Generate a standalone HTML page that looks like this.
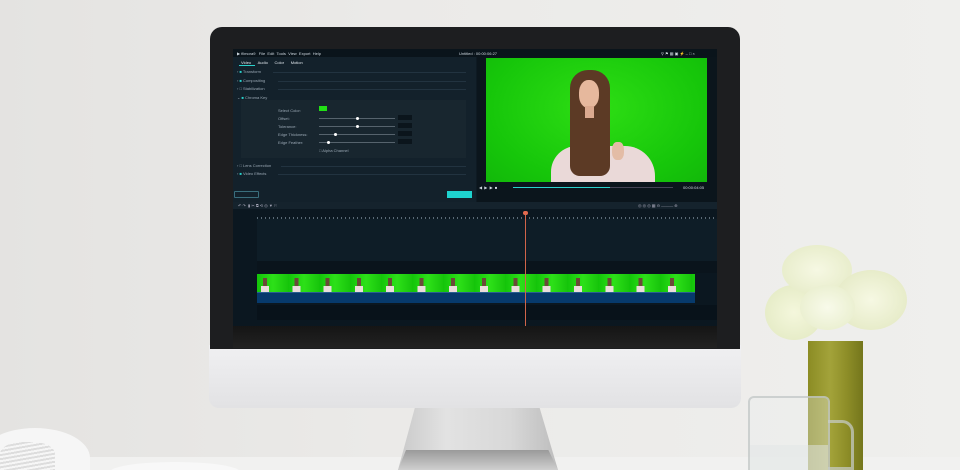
<!DOCTYPE html>
<html><head><style>
*{margin:0;padding:0;box-sizing:border-box}
html,body{width:960px;height:470px;overflow:hidden}
body{position:relative;background:linear-gradient(90deg,#e4e3e1 0%,#ebeae8 40%,#efefed 100%);font-family:"Liberation Sans",sans-serif}
.a{position:absolute}
.t{position:absolute;color:#9aa8b4;font-size:4px;white-space:nowrap}
.ln{position:absolute;height:1px;background:#223340}
</style></head><body>
<div class="a" style="left:0;top:457px;width:960px;height:13px;background:#f1f1f0"></div>
<div class="a" style="left:-20px;top:428px;width:110px;height:60px;border-radius:50% 50% 0 0;background:#f6f6f6"></div>
<div class="a" style="left:0;top:442px;width:55px;height:30px;background:repeating-linear-gradient(170deg,#ddd 0 2px,#f6f6f6 2px 4px);border-radius:40% 40% 0 0"></div>
<div class="a" style="left:110px;top:462px;width:130px;height:20px;border-radius:50%;background:#f8f8f8"></div>
<div class="a" style="left:398px;top:405px;width:160px;height:65px;background:linear-gradient(90deg,#c9c9c9,#e2e2e2 30%,#d8d8d8 70%,#bdbdbd);clip-path:polygon(11% 0,88% 0,100% 100%,0 100%)"></div>
<div class="a" style="left:398px;top:450px;width:160px;height:20px;background:linear-gradient(#9a9a9a,#cfcfcf);clip-path:polygon(5% 0,94% 0,100% 100%,0 100%)"></div>
<div class="a" style="left:209px;top:345px;width:532px;height:63px;background:linear-gradient(#f0f0f2,#e2e2e4);border-radius:0 0 10px 10px"></div>
<div class="a" style="left:210px;top:27px;width:530px;height:322px;background:#1d1e20;border-radius:12px 12px 0 0"></div>
<div class="a" style="left:233px;top:49px;width:484px;height:277px;background:#0e1a23;overflow:hidden">
 <div class="a" style="left:0;top:0;width:484px;height:8px;background:#0a141b"></div>
 <div class="t" style="left:4px;top:2px;color:#cfd8e0">▶ filmora9 &nbsp; File &nbsp;Edit &nbsp;Tools &nbsp;View &nbsp;Export &nbsp;Help</div>
 <div class="t" style="left:226px;top:2px;color:#cfd8e0">Untitled : 00:00:06:27</div>
 <div class="t" style="left:428px;top:2px;color:#cfd8e0">⚲ ⚑ ▦ ▣ ⚡ – □ ×</div>
 <div class="a" style="left:0;top:8px;width:243px;height:150px;background:#13212b"></div>
 <div class="t" style="left:8px;top:11px;color:#dfe6ec">Video &nbsp;&nbsp;&nbsp;&nbsp; Audio &nbsp;&nbsp;&nbsp;&nbsp; Color &nbsp;&nbsp;&nbsp;&nbsp; Motion</div>
 <div class="a" style="left:6px;top:16px;width:16px;height:1px;background:#2ad1cc"></div>
 <div class="t" style="left:4px;top:20px">› <span style="color:#2ad1cc">■</span> Transform</div>
 <div class="ln" style="left:40px;top:23px;width:193px"></div>
 <div class="t" style="left:4px;top:29px">› <span style="color:#2ad1cc">■</span> Compositing</div>
 <div class="ln" style="left:45px;top:32px;width:188px"></div>
 <div class="t" style="left:4px;top:37px">› □ Stabilization</div>
 <div class="ln" style="left:45px;top:40px;width:188px"></div>
 <div class="t" style="left:4px;top:46px">⌄ <span style="color:#2ad1cc">■</span> Chroma Key</div>
 <div class="a" style="left:8px;top:51px;width:225px;height:58px;background:#18262f"></div>
 <div class="t" style="left:45px;top:59px">Select Color:</div>
 <div class="a" style="left:86px;top:57px;width:8px;height:5px;background:#22e016"></div>
 <div class="t" style="left:45px;top:67px">Offset:</div>
 <div class="t" style="left:45px;top:75px">Tolerance:</div>
 <div class="t" style="left:45px;top:83px">Edge Thickness:</div>
 <div class="t" style="left:45px;top:91px">Edge Feather:</div>
 <div class="a" style="left:86px;top:69px;width:76px;height:1px;background:#56636d"></div>
 <div class="a" style="left:86px;top:77px;width:76px;height:1px;background:#56636d"></div>
 <div class="a" style="left:86px;top:85px;width:76px;height:1px;background:#56636d"></div>
 <div class="a" style="left:86px;top:93px;width:76px;height:1px;background:#56636d"></div>
 <div class="a" style="left:123px;top:68px;width:3px;height:3px;background:#fff;border-radius:50%"></div>
 <div class="a" style="left:123px;top:76px;width:3px;height:3px;background:#fff;border-radius:50%"></div>
 <div class="a" style="left:101px;top:84px;width:3px;height:3px;background:#fff;border-radius:50%"></div>
 <div class="a" style="left:94px;top:92px;width:3px;height:3px;background:#fff;border-radius:50%"></div>
 <div class="a" style="left:165px;top:66px;width:14px;height:5px;background:#0b151c"></div>
 <div class="a" style="left:165px;top:74px;width:14px;height:5px;background:#0b151c"></div>
 <div class="a" style="left:165px;top:82px;width:14px;height:5px;background:#0b151c"></div>
 <div class="a" style="left:165px;top:90px;width:14px;height:5px;background:#0b151c"></div>
 <div class="t" style="left:86px;top:99px">□ Alpha Channel</div>
 <div class="t" style="left:4px;top:114px">› □ Lens Correction</div>
 <div class="ln" style="left:48px;top:117px;width:185px"></div>
 <div class="t" style="left:4px;top:122px">› <span style="color:#2ad1cc">■</span> Video Effects</div>
 <div class="ln" style="left:45px;top:125px;width:188px"></div>
 <div class="a" style="left:1px;top:142px;width:25px;height:7px;border:1px solid #3a6e7c;border-radius:1px"></div>
 <div class="a" style="left:214px;top:142px;width:25px;height:7px;background:#1ed3cf"></div>
 <div class="a" style="left:244px;top:8px;width:240px;height:150px;background:#0b151c"></div>
 <div class="a" style="left:253px;top:9px;width:221px;height:124px;background:radial-gradient(ellipse at 50% 40%,#2ede14,#16c60a 70%,#12b80a);overflow:hidden">
  <div class="a" style="left:65px;top:88px;width:104px;height:40px;background:#ead9d8;border-radius:26px 30px 0 0"></div>
  <div class="a" style="left:84px;top:12px;width:40px;height:106px;background:#5c3a25;border-radius:18px 18px 10px 10px"></div>
  <div class="a" style="left:93px;top:22px;width:20px;height:28px;background:#e6b89d;border-radius:45%"></div>
  <div class="a" style="left:99px;top:48px;width:9px;height:12px;background:#dba98f"></div>
  <div class="a" style="left:126px;top:84px;width:12px;height:18px;background:#e3bca6;border-radius:40%"></div>
 </div>
 <div class="t" style="left:246px;top:136px;color:#cfd8e0">◀ &nbsp;▶ &nbsp;▶ &nbsp;■</div>
 <div class="t" style="left:450px;top:136px;color:#cfd8e0">00:00:04:05</div>
 <div class="a" style="left:280px;top:138px;width:160px;height:1px;background:#445"></div>
 <div class="a" style="left:280px;top:138px;width:97px;height:1px;background:#2ad1cc"></div>
 <div class="a" style="left:0;top:153px;width:484px;height:7px;background:#15232d"></div>
 <div class="t" style="left:5px;top:154px;color:#aab">↶ ↷ &nbsp;▮ ✂ ⧉ ⟲ ◎ ▼ ⚐</div>
 <div class="t" style="left:405px;top:154px;color:#aab">◎ ◎ ◎ ▦ ⊖ ——— ⊕</div>
 <div class="a" style="left:0;top:160px;width:484px;height:117px;background:#0b1720"></div>
 <div class="a" style="left:24px;top:168px;width:460px;height:2px;background:repeating-linear-gradient(90deg,#5a6a76 0 1px,transparent 1px 4px)"></div>
 <div class="a" style="left:24px;top:170px;width:460px;height:42px;background:#0e1d27"></div>
 <div class="a" style="left:24px;top:212px;width:460px;height:12px;background:#0a141c"></div>
 <div class="a" style="left:24px;top:225px;width:438px;height:18px;background:repeating-linear-gradient(90deg,#13c40a 0,#2de018 16px,#18c50c 31px)"></div>
 <div class="a" style="left:30px;top:229px;width:438px;height:14px;background:repeating-linear-gradient(90deg,#6b4a38 0 4px,transparent 4px 31.3px)"></div>
 <div class="a" style="left:28px;top:237px;width:438px;height:6px;background:repeating-linear-gradient(90deg,#eadddb 0 8px,transparent 8px 31.3px)"></div>
 <div class="a" style="left:24px;top:243px;width:438px;height:11px;background:#073a6c;border-top:1px solid #2a5f91"></div>
 <div class="a" style="left:24px;top:256px;width:460px;height:15px;background:#08121a"></div>
 <div class="a" style="left:292px;top:163px;width:1px;height:114px;background:#d0644a"></div>
 <div class="a" style="left:290px;top:162px;width:5px;height:4px;background:#e36a4f;border-radius:2px"></div>
</div>
<div class="a" style="left:233px;top:326px;width:484px;height:22px;background:linear-gradient(#151515,#222)"></div>
<div class="a" style="left:808px;top:341px;width:55px;height:129px;background:linear-gradient(90deg,#8b8c24,#a3a33a 40%,#8e8e28 70%,#74761c)"></div>
<div class="a" style="left:765px;top:285px;width:58px;height:55px;border-radius:50%;background:radial-gradient(#f4f7dc,#e1e8c0)"></div>
<div class="a" style="left:782px;top:245px;width:70px;height:50px;border-radius:50%;background:radial-gradient(#f6f8e3,#e3e9c3)"></div>
<div class="a" style="left:835px;top:270px;width:72px;height:60px;border-radius:50%;background:radial-gradient(#f6f8e3,#e1e7bf)"></div>
<div class="a" style="left:800px;top:285px;width:55px;height:45px;border-radius:50%;background:radial-gradient(#f8faea,#e6ecc8)"></div>
<div class="a" style="left:748px;top:396px;width:82px;height:74px;border:2px solid rgba(190,195,195,.7);border-bottom:none;border-radius:6px 6px 0 0;background:rgba(235,238,238,.35)"></div>
<div class="a" style="left:750px;top:445px;width:78px;height:25px;background:rgba(225,230,230,.5)"></div>
<div class="a" style="left:828px;top:420px;width:26px;height:50px;border:3px solid rgba(200,205,205,.7);border-left:none;border-radius:0 12px 0 0"></div>
</body></html>
